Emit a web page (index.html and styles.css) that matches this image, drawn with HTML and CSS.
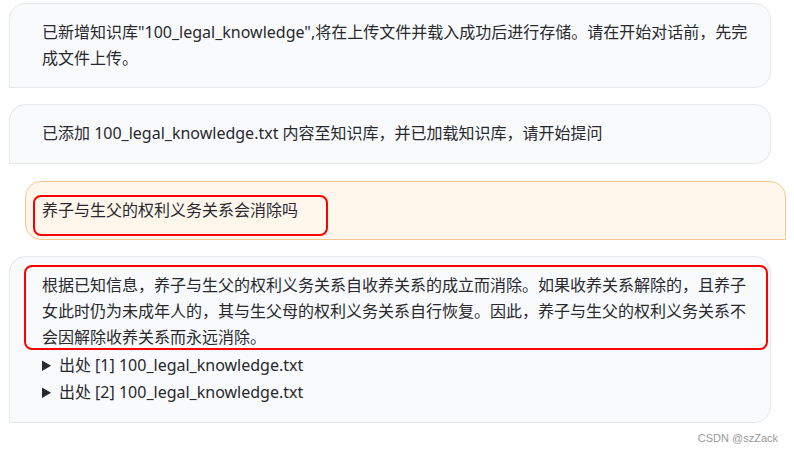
FILE: index.html
```html
<!DOCTYPE html>
<html lang="zh-CN">
<head>
  <meta charset="UTF-8">
  <meta name="viewport" content="width=device-width, initial-scale=1.0">
  <title>知识库问答</title>
  <link rel="stylesheet" href="styles.css">
</head>
<body>
  <div class="chat">
    <div class="msg bot">
      <p>已新增知识库"100_legal_knowledge",将在上传文件并载入成功后进行存储。请在开始对话前，先完成文件上传。</p>
    </div>

    <div class="msg bot">
      <p>已添加 100_legal_knowledge.txt 内容至知识库，并已加载知识库，请开始提问</p>
    </div>

    <div class="msg user">
      <p class="mark mark-question">养子与生父的权利义务关系会消除吗</p>
    </div>

    <div class="msg bot">
      <p class="mark mark-answer">根据已知信息，养子与生父的权利义务关系自收养关系的成立而消除。如果收养关系解除的，且养子女此时仍为未成年人的，其与生父母的权利义务关系自行恢复。因此，养子与生父的权利义务关系不会因解除收养关系而永远消除。</p>
      <details>
        <summary>出处 [1] 100_legal_knowledge.txt</summary>
      </details>
      <details>
        <summary>出处 [2] 100_legal_knowledge.txt</summary>
      </details>
    </div>
  </div>

  <div class="watermark">CSDN @szZack</div>
</body>
</html>
```

FILE: styles.css
```css
body {
  margin: 0;
  background-color: #ffffff;
  font-family: 'Noto Sans', 'Noto Sans CJK SC', sans-serif;
  font-size: 16px;
  line-height: 1.6;
  color: #27292f;
}

.chat {
  display: flex;
  flex-direction: column;
  gap: 16px;
  padding: 3px 8px 0 9px;
}

.msg {
  border: 1px solid #e5e7eb;
  border-radius: 16px;
  padding: 16px 12px 16px 32px;
  box-sizing: border-box;
}

.msg p {
  margin: 0;
}

.bot {
  align-self: flex-start;
  width: 762px;
  background-color: #f9fafb;
  border-bottom-left-radius: 0;
}

.user {
  align-self: flex-end;
  width: 761px;
  margin-top: 1px;
  background-color: #fff6ec;
  border-color: #fcc68c;
  border-bottom-right-radius: 0;
  padding-left: 16px;
}

/* red annotation boxes drawn over the screenshot */
.mark {
  position: relative;
}

.mark::after {
  content: "";
  position: absolute;
  border: 2px solid #ff0000;
  border-radius: 8px;
}

.mark-question::after {
  left: -9px;
  top: -3px;
  width: 291px;
  height: 37px;
}

.mark-answer::after {
  left: -18px;
  right: -10px;
  top: -8px;
  bottom: 0;
}

details {
  line-height: 27px;
}

.mark + details {
  margin-top: 2px;
}

summary {
  cursor: pointer;
}

.watermark {
  text-align: right;
  padding: 7px 16px 0 0;
  font-family: 'Liberation Sans', Arial, sans-serif;
  font-size: 11px;
  color: #9a9a9a;
}
```
